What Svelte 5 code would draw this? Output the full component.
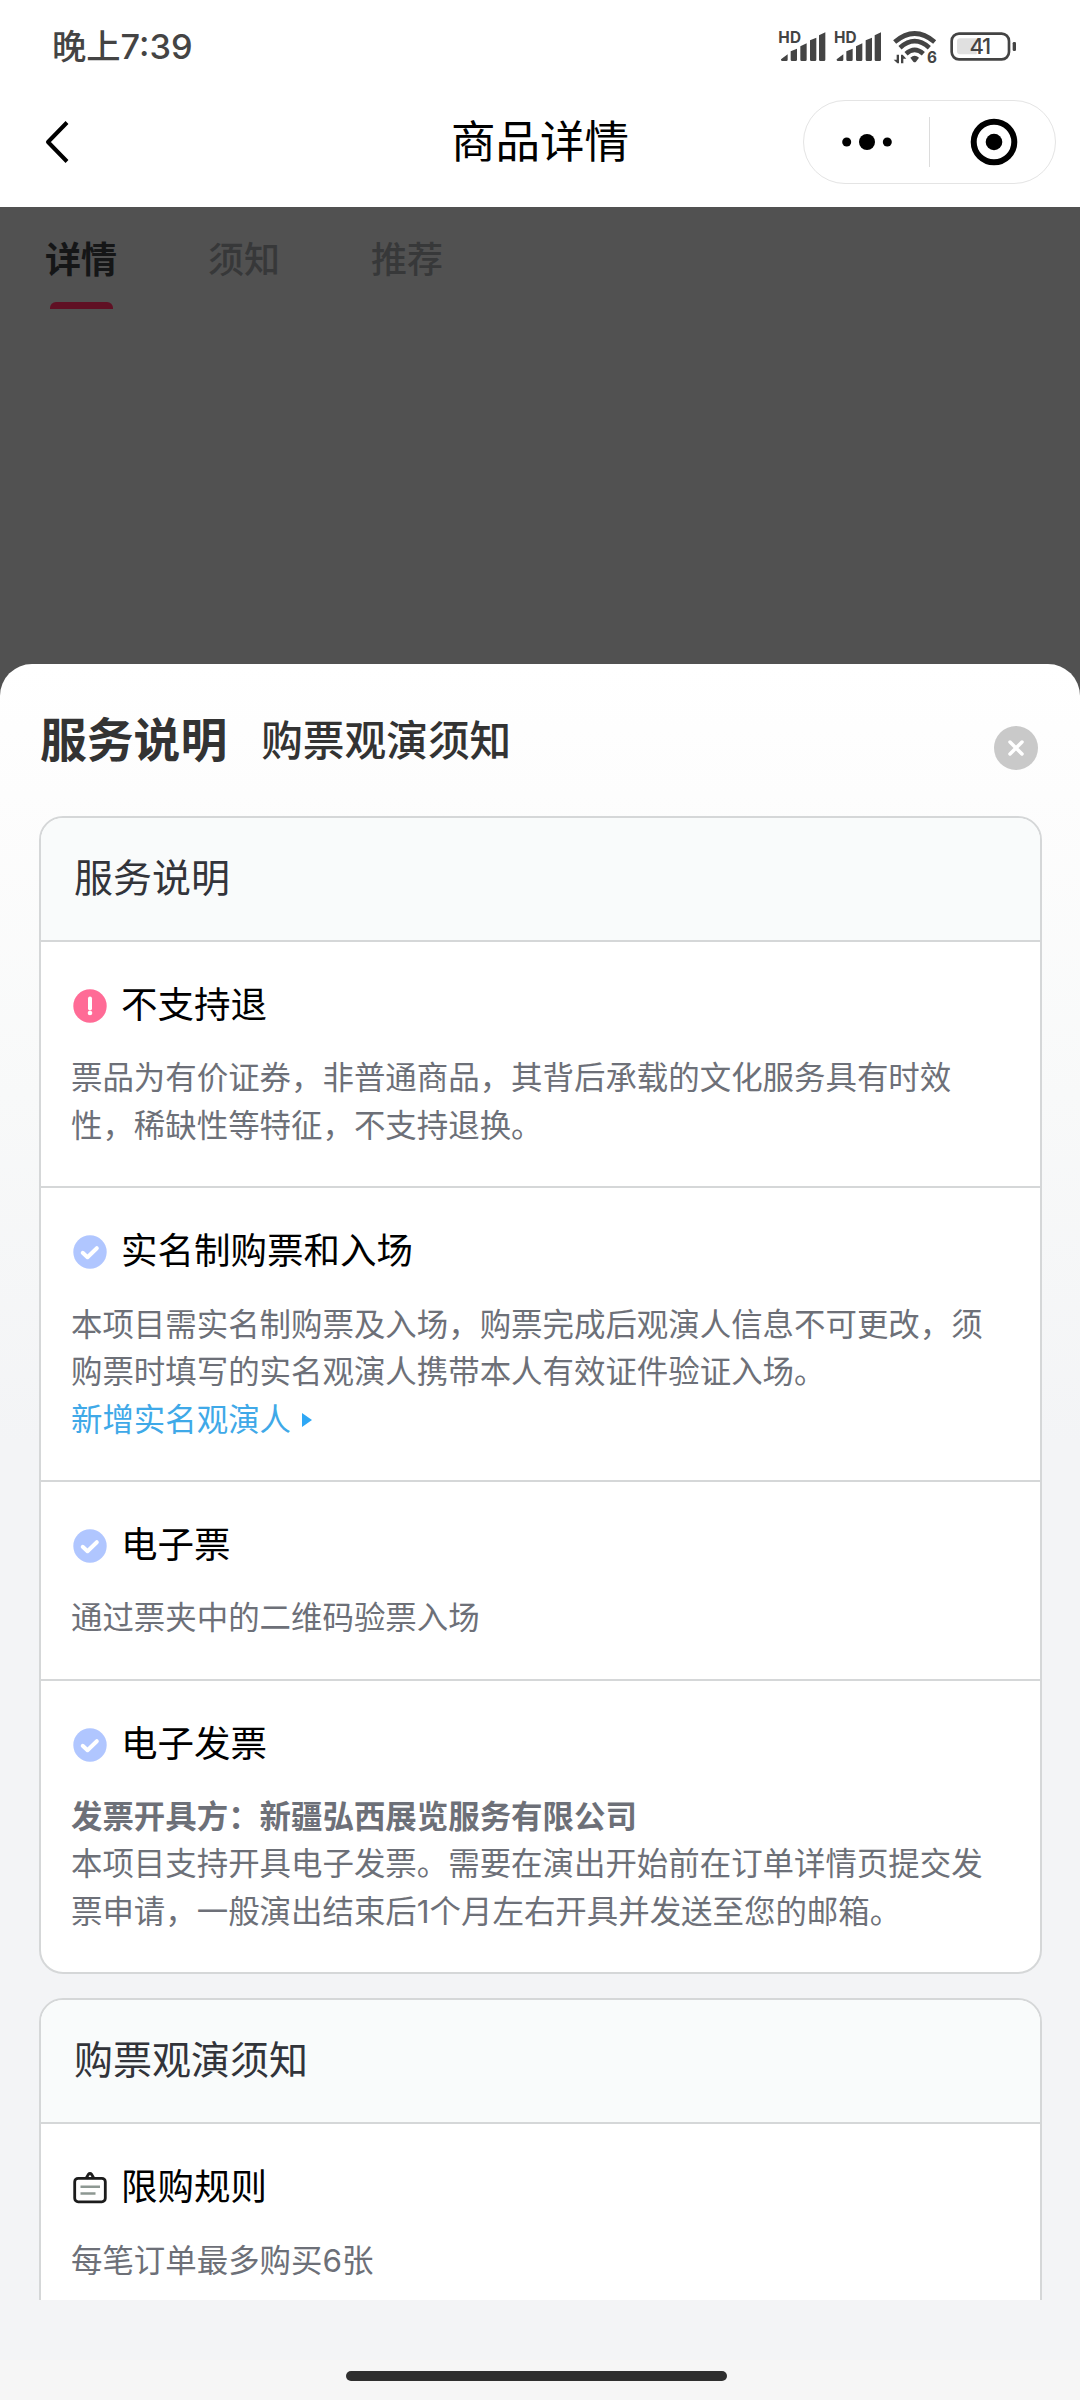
<script lang="ts">
	interface Item {
		icon: 'warn' | 'check' | 'board';
		title: string;
		strong?: string;
		text: string;
		link?: string;
	}

	interface Section {
		title: string;
		items: Item[];
	}

	const tabs = ['详情', '须知', '推荐'];
	const signals = [0, 167];

	const sections: Section[] = [
		{
			title: '服务说明',
			items: [
				{
					icon: 'warn',
					title: '不支持退',
					text: '票品为有价证券，非普通商品，其背后承载的文化服务具有时效性，稀缺性等特征，不支持退换。'
				},
				{
					icon: 'check',
					title: '实名制购票和入场',
					text: '本项目需实名制购票及入场，购票完成后观演人信息不可更改，须购票时填写的实名观演人携带本人有效证件验证入场。',
					link: '新增实名观演人'
				},
				{
					icon: 'check',
					title: '电子票',
					text: '通过票夹中的二维码验票入场'
				},
				{
					icon: 'check',
					title: '电子发票',
					strong: '发票开具方：新疆弘西展览服务有限公司',
					text: '本项目支持开具电子发票。需要在演出开始前在订单详情页提交发票申请，一般演出结束后1个月左右开具并发送至您的邮箱。'
				}
			]
		},
		{
			title: '购票观演须知',
			items: [{ icon: 'board', title: '限购规则', text: '每笔订单最多购买6张' }]
		}
	];

	let activeTab = $state(0);
</script>

<div class="screen">
	<div class="status-bar">
		<span class="time">晚上7:39</span>
		<svg class="status-icons" viewBox="111 84 720 114">
			{#each signals as dx}
				<g transform="translate({dx} 0)">
					<text class="hd" x="115" y="128" textLength="68">HD</text>
					<path d="M123 178l20-15v16q0 4-4 4h-12q-4 0-4-4zM152 154l19-8v33q0 4-4 4h-11q-4 0-4-4zM181 139l19-9v49q0 4-4 4h-11q-4 0-4-4zM210 121l19-8v66q0 4-4 4h-11q-4 0-4-4zM237 106l19-9v82q0 4-4 4h-11q-4 0-4-4z" />
				</g>
			{/each}
			<g class="wifi">
				<path d="M464 126Q524 75 584 126" />
				<path d="M480 143Q524 104 568 143" />
				<path d="M498 161Q524 138 550 161" />
			</g>
			<path d="M511 173q13-11 26 0l-9 12q-4 4-8 0z" />
			<path d="M470 164h7v26h-5l-11-11h9zM483 190v-26h5l11 12h-9v14z" />
			<text class="gen" x="561" y="189">6</text>
			<rect class="battery" x="635" y="101" width="172" height="77" rx="22" />
			<path class="charge" d="M660 115h50v48h-50q-9 0-9-9v-30q0-9 9-9z" />
			<rect x="818" y="126" width="10" height="27" rx="4" />
			<text class="level" x="719" y="161">41</text>
		</svg>
	</div>

	<header class="nav-bar">
		<svg class="back" viewBox="0 0 28 48">
			<path d="M23 4.500L4 24L23 43.500" />
		</svg>
		<h1>商品详情</h1>
		<div class="capsule">
			<svg class="more" viewBox="0 0 50 18">
				<circle cx="4.700" cy="9" r="4.500" />
				<circle cx="25" cy="9" r="8" />
				<circle cx="45.300" cy="9" r="4.500" />
			</svg>
			<span class="split"></span>
			<svg class="target" viewBox="0 0 48 48">
				<circle class="ring" cx="24" cy="24" r="20.300" />
				<circle cx="24" cy="24" r="8.300" />
			</svg>
		</div>
	</header>

	<div class="masked-page">
		{#each tabs as tab, i}
			<button class="tab" class:active={i === activeTab} onclick={() => (activeTab = i)}>
				{tab}
			</button>
		{/each}
	</div>

	<section class="sheet">
		<div class="sheet-head">
			<span class="current">服务说明</span>
			<span class="other">购票观演须知</span>
			<svg class="close" viewBox="0 0 44 44">
				<circle cx="22" cy="22" r="22" />
				<path d="M16 16L28 28M28 16L16 28" />
			</svg>
		</div>

		<div class="sheet-body">
			{#each sections as section}
				<div class="card">
					<h2>{section.title}</h2>
					{#each section.items as item}
						<div class="item">
							<div class="item-title">
								<svg class="item-icon" viewBox="0 0 34 34">
									{#if item.icon === 'warn'}
										<circle class="warn" cx="17" cy="17" r="16.700" />
										<path class="mark" d="M17 9.500v10" />
										<circle class="dot" cx="17" cy="24" r="2.300" />
									{:else if item.icon === 'check'}
										<circle class="ok" cx="17" cy="17" r="16.700" />
										<path class="mark" d="M9.700 17.800l4.800 4.400l9.300-9" />
									{:else}
										<rect class="board" x="1.700" y="7.300" width="30.600" height="23.500" rx="3.500" />
										<path class="board" d="M13 7.500L15.300 3.500Q17 1.500 18.700 3.500L21 7.500" />
										<path class="board-line" d="M7.500 15.800H27M7.500 22.500H22.500" />
									{/if}
								</svg>
								<span>{item.title}</span>
							</div>
							<div class="item-text">
								{#if item.strong}<strong>{item.strong}</strong>{/if}
								<p>{item.text}</p>
								{#if item.link}
									<span class="link">
										{item.link}
										<svg viewBox="0 0 10 14"><path d="M0 0L10 7L0 14z" /></svg>
									</span>
								{/if}
							</div>
						</div>
					{/each}
				</div>
			{/each}
		</div>
	</section>

	<footer class="home-area">
		<div class="home-bar"></div>
	</footer>
</div>

<style>
	:global(body) {
		background: #fff;
	}

	.screen {
		display: flex;
		flex-direction: column;
		width: 1080px;
		height: 2400px;
		overflow: hidden;
		background: #515151;
		font-family: Inter, 'Noto Sans CJK SC', sans-serif;
	}

	h1,
	h2,
	p {
		margin: 0;
		font-weight: 400;
	}

	svg {
		display: block;
		flex-shrink: 0;
	}

	.status-bar {
		display: flex;
		justify-content: space-between;
		align-items: center;
		box-sizing: border-box;
		height: 94px;
		padding: 0 63px 0 52px;
		background: #fff;
		color: #444;
	}

	.time {
		font-size: 34.3px;
		font-weight: 500;
		line-height: 94px;
	}

	.status-icons {
		width: 240px;
		height: 38px;
		fill: #444;
	}

	.hd {
		font-size: 46px;
		font-weight: 700;
	}

	.gen {
		font-size: 46px;
		font-weight: 700;
	}

	.level {
		font-size: 66px;
		font-weight: 500;
		letter-spacing: -4px;
		text-anchor: middle;
	}

	.wifi {
		fill: none;
		stroke: #444;
		stroke-width: 14;
	}

	.battery {
		fill: none;
		stroke: #444;
		stroke-width: 8;
	}

	.charge {
		fill: #e0e0e0;
	}

	.nav-bar {
		display: grid;
		grid-template-columns: 253px 1fr 253px;
		align-items: center;
		box-sizing: border-box;
		height: 113px;
		padding: 0 24px 17px;
		background: #fff;
	}

	.nav-bar h1 {
		color: #000;
		font-size: 44.5px;
		line-height: 60px;
		text-align: center;
	}

	.back {
		width: 28px;
		height: 48px;
		margin-left: 20px;
		fill: none;
		stroke: #000;
		stroke-width: 4;
		stroke-linejoin: round;
	}

	.capsule {
		display: grid;
		grid-template-columns: 1fr 1px 1fr;
		align-items: center;
		justify-items: center;
		box-sizing: border-box;
		height: 84px;
		border: 1px solid #e4e4e4;
		border-radius: 42px;
	}

	.more {
		width: 50px;
		height: 18px;
	}

	.split {
		width: 1px;
		height: 50px;
		background: #dcdcdc;
	}

	.target {
		width: 48px;
		height: 48px;
		margin-left: 3px;
	}

	.ring {
		fill: none;
		stroke: #000;
		stroke-width: 6;
	}

	.masked-page {
		display: flex;
		gap: 91px;
		box-sizing: border-box;
		height: 457px;
		padding: 19px 0 0 45px;
	}

	.tab {
		display: flex;
		flex-direction: column;
		align-items: center;
		width: 72px;
		height: 83px;
		padding: 0;
		border: 0;
		background: none;
		color: #373839;
		font: 500 36px/62px 'Noto Sans CJK SC', sans-serif;
		white-space: nowrap;
	}

	.tab.active {
		color: #151617;
		font-weight: 700;
	}

	.tab.active::after {
		content: '';
		width: 63px;
		height: 7px;
		margin-top: 14px;
		border-radius: 6px 6px 0 0;
		background: #601024;
	}

	.sheet {
		display: flex;
		flex-direction: column;
		height: 1696px;
		border-radius: 32px 32px 0 0;
		background: linear-gradient(#fff 0, #fdfdfd 130px, #f8f9f9 430px, #f3f4f6 780px);
	}

	.sheet-head {
		display: flex;
		align-items: center;
		box-sizing: border-box;
		height: 152px;
		padding: 0 42px 0 40px;
		color: #333;
	}

	.current {
		margin-bottom: 7px;
		font-size: 46.8px;
		font-weight: 700;
	}

	.other {
		margin: 0 0 4px 34px;
		font-size: 41.7px;
		font-weight: 500;
	}

	.close {
		width: 44px;
		height: 44px;
		margin: 16px 0 0 auto;
		fill: #c9c9c9;
	}

	.close path {
		stroke: #fff;
		stroke-width: 3.5;
		stroke-linecap: round;
	}

	.sheet-body {
		height: 1484px;
		padding: 0 38px 0 39px;
		overflow: hidden;
	}

	.card {
		margin-bottom: 24px;
		border: 2px solid #d5d7d8;
		border-radius: 24px;
		background: #fff;
		overflow: hidden;
	}

	.card h2 {
		padding: 0 0 2px 33px;
		background: #f9fbfb;
		color: #32343a;
		font-size: 39px;
		line-height: 120px;
	}

	.item {
		padding: 38px 30px 35.8px;
		border-top: 2px solid #d5d7d8;
	}

	.item-title {
		display: flex;
		align-items: center;
		gap: 14px;
		height: 50px;
		margin-left: 2px;
		color: #000;
		font-size: 36.5px;
		line-height: 50px;
	}

	.item-icon {
		width: 34px;
		height: 34px;
		margin-top: 2px;
	}

	.warn {
		fill: #ff6b96;
	}

	.ok {
		fill: #b0c6ff;
	}

	.dot {
		fill: #fff;
	}

	.mark {
		fill: none;
		stroke: #fff;
		stroke-width: 4;
		stroke-linecap: round;
		stroke-linejoin: round;
	}

	.board {
		fill: none;
		stroke: #1c1c1c;
		stroke-width: 2.8;
	}

	.board-line {
		stroke: #8d9892;
		stroke-width: 2.4;
	}

	.item-text {
		margin-top: 25.4px;
		color: #6d7078;
		font-size: 31.45px;
		line-height: 47.5px;
	}

	.item-text strong {
		display: block;
		font-weight: 700;
	}

	.link {
		display: flex;
		align-items: center;
		gap: 11px;
		color: #3fa9e8;
	}

	.link svg {
		width: 10px;
		height: 14px;
		fill: #2ea7f5;
	}

	.home-area {
		display: flex;
		height: 40px;
		background: #f6f6f6;
	}

	.home-bar {
		width: 381px;
		height: 10px;
		margin: 11px 0 0 346px;
		border-radius: 5px;
		background: #2f2f2f;
	}
</style>
